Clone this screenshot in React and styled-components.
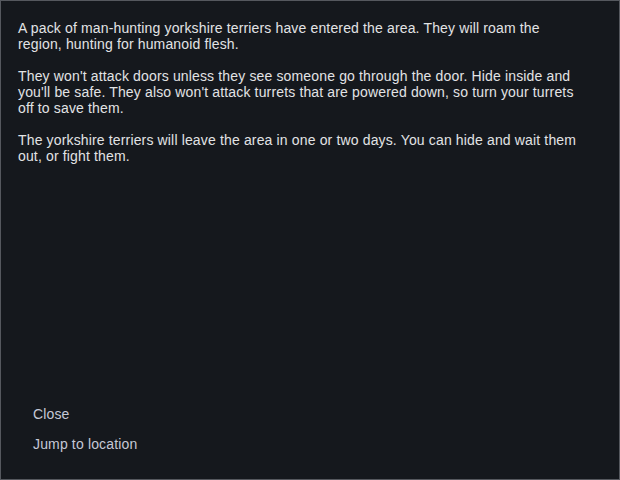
import React from "react";
import styled, { createGlobalStyle } from "styled-components";

const Global = createGlobalStyle`
  html, body { margin: 0; padding: 0; background: #15181d; }
  #root { width: 620px; height: 480px; }
`;

const Panel = styled.div`
  box-sizing: border-box;
  width: 620px;
  height: 480px;
  border: 1px solid #55585e;
  background: #15181d;
  display: flex;
  flex-direction: column;
  font-family: "Liberation Sans", Arial, sans-serif;
  color: #e2e3e5;
  letter-spacing: 0.15px;
`;

const Body = styled.div`
  flex: 1;
  padding: 19px 34px 0 17px;
`;

const Para = styled.p`
  margin: 0 0 16px 0;
  font-size: 14px;
  line-height: 16px;
`;

const Actions = styled.div`
  display: flex;
  flex-direction: column;
  align-items: flex-start;
  gap: 14px;
  padding: 0 0 27px 32px;
`;

const Action = styled.span`
  font-size: 14px;
  line-height: 16px;
  color: #c5c8d6;
  cursor: pointer;
`;

export default function App() {
  return (
    <>
      <Global />
      <Panel>
        <Body>
          <Para>
            A pack of man-hunting yorkshire terriers have entered the area. They will roam the region, hunting for humanoid flesh.
          </Para>
          <Para>
            They won't attack doors unless they see someone go through the door. Hide inside and you'll be safe. They also won't attack turrets that are powered down, so turn your turrets off to save them.
          </Para>
          <Para>
            The yorkshire terriers will leave the area in one or two days. You can hide and wait them out, or fight them.
          </Para>
        </Body>
        <Actions>
          <Action>Close</Action>
          <Action>Jump to location</Action>
        </Actions>
      </Panel>
    </>
  );
}
